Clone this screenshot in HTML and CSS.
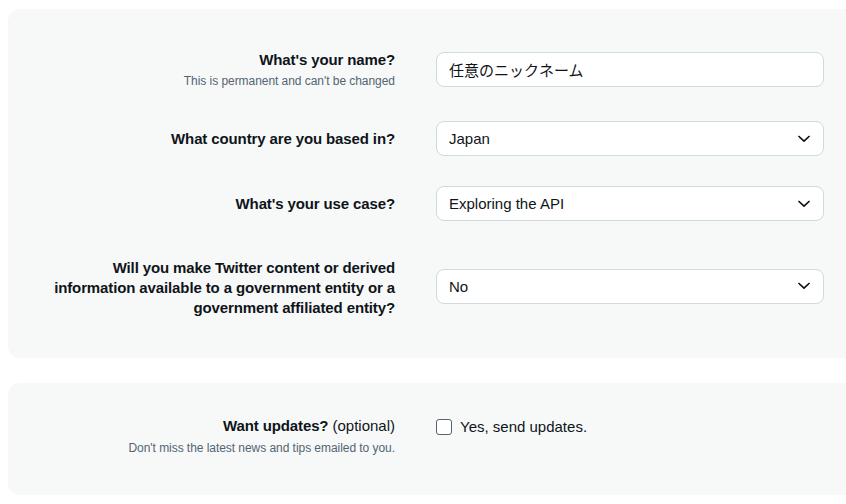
FILE: index.html
```html
<!DOCTYPE html>
<html lang="en">
<head>
<meta charset="utf-8">
<title>Account details</title>
<link rel="stylesheet" href="styles.css">
</head>
<body>
<section class="card card-main">
  <div class="row row-name">
    <div class="label">
      <div class="title">What's your name?</div>
      <div class="sub">This is permanent and can't be changed</div>
    </div>
    <div class="field"><div class="input">任意のニックネーム</div></div>
  </div>
  <div class="row row-country">
    <div class="label"><div class="title">What country are you based in?</div></div>
    <div class="field"><div class="input select">Japan<svg class="chev" viewBox="0 0 12 8" width="12" height="8"><path d="M1 1.5 L6 6.2 L11 1.5" fill="none" stroke="#0f1419" stroke-width="1.7" stroke-linecap="round" stroke-linejoin="round"/></svg></div></div>
  </div>
  <div class="row row-use">
    <div class="label"><div class="title">What's your use case?</div></div>
    <div class="field"><div class="input select">Exploring the API<svg class="chev" viewBox="0 0 12 8" width="12" height="8"><path d="M1 1.5 L6 6.2 L11 1.5" fill="none" stroke="#0f1419" stroke-width="1.7" stroke-linecap="round" stroke-linejoin="round"/></svg></div></div>
  </div>
  <div class="row row-gov">
    <div class="label"><div class="title">Will you make Twitter content or derived<br>information available to a government entity or a<br>government affiliated entity?</div></div>
    <div class="field"><div class="input select">No<svg class="chev" viewBox="0 0 12 8" width="12" height="8"><path d="M1 1.5 L6 6.2 L11 1.5" fill="none" stroke="#0f1419" stroke-width="1.7" stroke-linecap="round" stroke-linejoin="round"/></svg></div></div>
  </div>
</section>
<section class="card card-updates">
  <div class="row row-updates">
    <div class="label">
      <div class="title">Want updates? <span class="opt">(optional)</span></div>
      <div class="sub">Don't miss the latest news and tips emailed to you.</div>
    </div>
    <div class="field">
      <label class="check"><span class="box"></span>Yes, send updates.</label>
    </div>
  </div>
</section>
</body>
</html>
```
FILE: styles.css
```css
html, body {
  overflow: hidden;
}
body {
  margin: 9px 0 0 8px;
  background: #ffffff;
  font-family: "Liberation Sans", Arial, sans-serif;
  color: #0f1419;
  width: 860px;
}
.card {
  background: #f7f9f9;
  border-radius: 12px;
  width: 860px;
}
.card-main {
  padding: 41px 0 40px;
  height: 349px;
  box-sizing: border-box;
}
.card-updates {
  margin-top: 25px;
  padding: 33px 0 0;
  height: 112px;
  box-sizing: border-box;
}
.row {
  display: grid;
  grid-template-columns: 387px 388px;
  column-gap: 41px;
  align-items: center;
}
.row-country { margin-top: 33px; }
.row-use { margin-top: 30px; }
.row-gov { margin-top: 33px; }
.row-gov .label { padding-top: 4px; }
.row-updates { align-items: start; }
.label {
  text-align: right;
}
.title {
  font-weight: bold;
  font-size: 15px;
  line-height: 20px;
  letter-spacing: -0.12px;
}
.opt {
  font-weight: normal;
  letter-spacing: 0;
}
.sub {
  font-size: 12px;
  line-height: 14px;
  color: #536471;
  margin-top: 4px;
  letter-spacing: -0.05px;
}
.row-updates .sub { margin-top: 5px; }
.row-updates .field { margin-top: 1px; }
.input {
  height: 35px;
  box-sizing: border-box;
  background: #ffffff;
  border: 1px solid #cfd9de;
  border-radius: 8px;
  padding: 0 13px 0 12px;
  display: flex;
  align-items: center;
  justify-content: space-between;
  font-size: 15px;
  color: #0f1419;
}
.row-name .input {
  font-family: "Liberation Sans", "Noto Sans CJK JP", sans-serif;
  font-size: 15px;
}
.chev {
  display: block;
}
.check {
  display: flex;
  align-items: center;
  font-size: 15px;
  line-height: 20px;
  color: #0f1419;
}
.box {
  width: 16px;
  height: 16px;
  box-sizing: border-box;
  border: 1.5px solid #536471;
  border-radius: 3px;
  background: #ffffff;
  margin-right: 8px;
}
```
